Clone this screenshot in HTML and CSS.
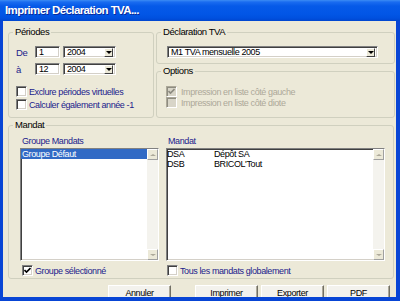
FILE: index.html
```html
<!DOCTYPE html>
<html lang="fr">
<head>
  <meta charset="UTF-8" />
  <title>Imprimer Déclaration TVA...</title>
  <link rel="stylesheet" href="styles.css">
</head>
<body>

  <div class="window">
    <div class="titlebar">Imprimer Déclaration TVA...</div>

    <div class="frame">
      <div class="top-row">

        <fieldset class="group periods">
          <legend>Périodes</legend>
          <div class="period-rows">
            <div class="period-row">
              <span class="lbl">De</span>
              <div class="edit month">1</div>
              <div class="combo year"><span class="val">2004</span><span class="drop"></span></div>
            </div>
            <div class="period-row">
              <span class="lbl">à</span>
              <div class="edit month">12</div>
              <div class="combo year"><span class="val">2004</span><span class="drop"></span></div>
            </div>
          </div>
          <div class="checks">
            <div class="check-row"><span class="box"></span><span>Exclure périodes virtuelles</span></div>
            <div class="check-row"><span class="box"></span><span>Calculer également année -1</span></div>
          </div>
        </fieldset>

        <div class="right-col">
          <fieldset class="group decl">
            <legend>Déclaration TVA</legend>
            <div class="combo decl-combo"><span class="val">M1 TVA mensuelle 2005</span><span class="drop"></span></div>
          </fieldset>

          <fieldset class="group options">
            <legend>Options</legend>
            <div class="checks opt-checks">
              <div class="check-row disabled">
                <span class="box">
                  <svg width="7" height="7" viewBox="0 0 7 7"><path d="M0.5 3l2 2 4-4" fill="none" stroke="#8c8a80" stroke-width="1.6"/></svg>
                </span>
                <span>Impression en liste côté gauche</span>
              </div>
              <div class="check-row disabled"><span class="box"></span><span>Impression en liste côté diote</span></div>
            </div>
          </fieldset>
        </div>
      </div>

      <fieldset class="group mandat">
        <legend>Mandat</legend>
        <div class="mandat-cols">
          <div class="mcol left">
            <div class="mcol-head">Groupe Mandats</div>
            <div class="list">
              <div class="items">
                <div class="item selected">Groupe Défaut</div>
              </div>
              <div class="scrollbar"><span class="sb-btn up"></span><span class="sb-track"></span><span class="sb-btn down"></span></div>
            </div>
            <div class="check-row">
              <span class="box">
                <svg width="7" height="7" viewBox="0 0 7 7"><path d="M0.5 3l2 2 4-4" fill="none" stroke="#000" stroke-width="1.6"/></svg>
              </span>
              <span>Groupe sélectionné</span>
            </div>
          </div>

          <div class="mcol right">
            <div class="mcol-head">Mandat</div>
            <div class="list">
              <div class="items">
                <div class="item"><span class="code">DSA</span><span>Dépôt SA</span></div>
                <div class="item"><span class="code">DSB</span><span>BRICOL'Tout</span></div>
              </div>
              <div class="scrollbar"><span class="sb-btn up"></span><span class="sb-track"></span><span class="sb-btn down"></span></div>
            </div>
            <div class="check-row"><span class="box"></span><span>Tous les mandats globalement</span></div>
          </div>
        </div>
      </fieldset>

      <div class="buttons">
        <div class="btn cancel">Annuler</div>
        <div class="btn">Imprimer</div>
        <div class="btn">Exporter</div>
        <div class="btn">PDF</div>
      </div>
    </div>
  </div>

</body>
</html>
```

FILE: styles.css
```css
body {
  margin: 0;
  font-family: "Liberation Sans", Arial, sans-serif;
  font-size: 9px;
  letter-spacing: -0.4px;
  color: #000;
  background: #fff;
}

.window {
  width: 400px;
  height: 301px;
  display: flex;
  flex-direction: column;
  overflow: hidden;
}

.titlebar {
  flex: none;
  height: 21px;
  line-height: 21px;
  padding-left: 5px;
  color: #fff;
  font-weight: bold;
  font-size: 11.5px;
  letter-spacing: -0.6px;
  text-shadow: 1px 1px #0a2a9a;
  background: linear-gradient(to bottom, #3c8cf4 0, #1a6cf0 2px, #065ae8 6px, #0256e6 14px, #0050df 18px, #0046cf 21px);
}

.frame {
  flex: 1;
  min-height: 0;
  overflow: hidden;
  background-color: #ece9d8;
  border: solid #0845d5;
  border-width: 0 4px 4px 3px;
  padding: 5px 0 0 5px;
}

/* group boxes */
.group {
  margin: 0;
  padding: 0 4px;
  min-width: 0;
  box-sizing: border-box;
  border: 1px solid #d0d0bf;
  border-radius: 3px;
}

.group legend {
  padding: 0 2px;
  line-height: 12px;
  font-size: 9.5px;
}

.top-row {
  display: flex;
  gap: 2px;
}

.periods {
  width: 146px;
  height: 92px;
}

.right-col {
  width: 239px;
  display: flex;
  flex-direction: column;
  gap: 1px;
}

.decl {
  height: 38px;
}

.options {
  height: 53px;
}

.mandat {
  width: 386px;
  height: 160px;
  margin-top: 1px;
}

/* sunken fields */
.edit,
.combo,
.list,
.box {
  box-sizing: border-box;
  background: #fff;
  border: 1px solid;
  border-color: #808080 #fff #fff #808080;
  box-shadow: inset 1px 1px #404040, inset -1px -1px #d4d0c8;
}

.period-rows {
  padding: 8px 0 0 3px;
  display: flex;
  flex-direction: column;
  gap: 5px;
}

.period-row {
  display: flex;
  align-items: center;
  height: 12px;
}

.lbl {
  width: 19px;
  color: #22228c;
  font-size: 9.5px;
}

.edit {
  height: 12px;
  line-height: 10px;
  padding-left: 3px;
}

.month {
  width: 25px;
  margin-right: 3px;
}

.combo {
  display: flex;
  align-items: center;
  height: 12px;
  padding: 1px;
}

.combo .val {
  flex: 1;
  padding-left: 2px;
  line-height: 10px;
}

.year {
  width: 53px;
}

.drop {
  width: 9px;
  height: 9px;
  margin-right: 1px;
  box-sizing: border-box;
  background: #ece9d8;
  border: 1px solid;
  border-color: #fff #404040 #404040 #fff;
  display: flex;
  align-items: center;
  justify-content: center;
}

.drop::after {
  content: "";
  border-style: solid;
  border-width: 3px 3px 0;
  border-color: #000 transparent transparent;
}

.decl-combo {
  width: 211px;
  margin: 8px 0 0 6px;
}

/* check boxes */
.checks {
  margin-top: 11px;
  display: flex;
  flex-direction: column;
  gap: 2px;
}

.check-row {
  display: flex;
  align-items: center;
  gap: 2px;
  height: 11px;
  padding-left: 3px;
  color: #22228c;
  white-space: nowrap;
}

.box {
  width: 11px;
  height: 11px;
  flex: none;
  display: flex;
  align-items: center;
  justify-content: center;
}

.opt-checks {
  margin-top: 9px;
  padding-left: 2px;
  gap: 0;
}

.check-row.disabled {
  color: #aca899;
  gap: 4px;
}

.disabled .box {
  background: #d8d5c8;
  border-color: #aca899 #fff #fff #aca899;
  box-shadow: inset 1px 1px #8e8c80;
}

/* mandat lists */
.mandat-cols {
  display: flex;
  gap: 7px;
  padding-left: 7px;
}

.mcol.left {
  width: 139px;
}

.mcol.right {
  width: 219px;
}

.mcol-head {
  line-height: 12px;
  margin: 4px 0 1px 2px;
  color: #22228c;
}

.list {
  height: 113px;
  display: flex;
}

.items {
  flex: 1;
}

.item {
  height: 10px;
  line-height: 10px;
  display: flex;
}

.item.selected {
  background: #316ac5;
  color: #fff;
  padding-left: 1px;
}

.item .code {
  width: 47px;
}

.scrollbar {
  width: 11px;
  display: flex;
  flex-direction: column;
  background: #f4f3ee;
}

.sb-track {
  flex: 1;
}

.sb-btn {
  height: 11px;
  box-sizing: border-box;
  background: #ece9d8;
  border: 1px solid;
  border-color: #fff #a0a0a0 #a0a0a0 #fff;
  display: flex;
  align-items: center;
  justify-content: center;
}

.sb-btn::after {
  content: "";
  border-style: solid;
  border-color: transparent;
}

.sb-btn.up::after {
  border-width: 0 3px 2px;
  border-bottom-color: #aca899;
}

.sb-btn.down::after {
  border-width: 2px 3px 0;
  border-top-color: #aca899;
}

.mcol .check-row {
  margin-top: 4px;
  padding-left: 2px;
}

.mcol.right .check-row {
  padding-left: 1px;
}

/* bottom buttons */
.buttons {
  display: flex;
  gap: 3px;
  margin-top: 6px;
  padding-left: 100px;
}

.btn {
  width: 63px;
  height: 16px;
  box-sizing: border-box;
  line-height: 14px;
  text-align: center;
  background: #f3f2ed;
  border: 1px solid;
  border-color: #fff #716f64 #716f64 #fff;
  box-shadow: inset -1px -1px #aca899;
}

.btn.cancel {
  margin-right: 21px;
}
```
